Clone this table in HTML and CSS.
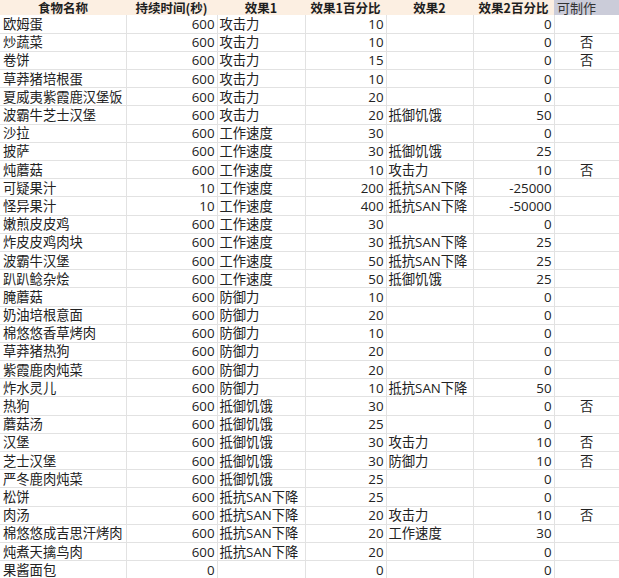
FILE: index.html
```html
<!DOCTYPE html>
<html lang="zh-CN">
<head>
<meta charset="utf-8">
<title>食物</title>
<link rel="stylesheet" href="styles.css">
</head>
<body>
<table class="sheet">
  <colgroup>
    <col class="c-name"><col class="c-dur"><col class="c-e1"><col class="c-p1"><col class="c-e2"><col class="c-p2"><col class="c-mk">
  </colgroup>
  <thead>
    <tr>
      <th>食物名称</th><th>持续时间(秒)</th><th>效果1</th><th>效果1百分比</th><th>效果2</th><th>效果2百分比</th><th class="mk-h">可制作</th>
    </tr>
  </thead>
  <tbody>
    <tr><td>欧姆蛋</td><td class="n">600</td><td>攻击力</td><td class="n">10</td><td></td><td class="n">0</td><td class="mk"></td></tr>
    <tr><td>炒蔬菜</td><td class="n">600</td><td>攻击力</td><td class="n">10</td><td></td><td class="n">0</td><td class="mk">否</td></tr>
    <tr><td>卷饼</td><td class="n">600</td><td>攻击力</td><td class="n">15</td><td></td><td class="n">0</td><td class="mk">否</td></tr>
    <tr><td>草莽猪培根蛋</td><td class="n">600</td><td>攻击力</td><td class="n">10</td><td></td><td class="n">0</td><td class="mk"></td></tr>
    <tr><td>夏威夷紫霞鹿汉堡饭</td><td class="n">600</td><td>攻击力</td><td class="n">20</td><td></td><td class="n">0</td><td class="mk"></td></tr>
    <tr><td>波霸牛芝士汉堡</td><td class="n">600</td><td>攻击力</td><td class="n">20</td><td>抵御饥饿</td><td class="n">50</td><td class="mk"></td></tr>
    <tr><td>沙拉</td><td class="n">600</td><td>工作速度</td><td class="n">30</td><td></td><td class="n">0</td><td class="mk"></td></tr>
    <tr><td>披萨</td><td class="n">600</td><td>工作速度</td><td class="n">30</td><td>抵御饥饿</td><td class="n">25</td><td class="mk"></td></tr>
    <tr><td>炖蘑菇</td><td class="n">600</td><td>工作速度</td><td class="n">10</td><td>攻击力</td><td class="n">10</td><td class="mk">否</td></tr>
    <tr><td>可疑果汁</td><td class="n">10</td><td>工作速度</td><td class="n">200</td><td>抵抗SAN下降</td><td class="n">-25000</td><td class="mk"></td></tr>
    <tr><td>怪异果汁</td><td class="n">10</td><td>工作速度</td><td class="n">400</td><td>抵抗SAN下降</td><td class="n">-50000</td><td class="mk"></td></tr>
    <tr><td>嫩煎皮皮鸡</td><td class="n">600</td><td>工作速度</td><td class="n">30</td><td></td><td class="n">0</td><td class="mk"></td></tr>
    <tr><td>炸皮皮鸡肉块</td><td class="n">600</td><td>工作速度</td><td class="n">30</td><td>抵抗SAN下降</td><td class="n">25</td><td class="mk"></td></tr>
    <tr><td>波霸牛汉堡</td><td class="n">600</td><td>工作速度</td><td class="n">50</td><td>抵抗SAN下降</td><td class="n">25</td><td class="mk"></td></tr>
    <tr><td>趴趴鲶杂烩</td><td class="n">600</td><td>工作速度</td><td class="n">50</td><td>抵御饥饿</td><td class="n">25</td><td class="mk"></td></tr>
    <tr><td>腌蘑菇</td><td class="n">600</td><td>防御力</td><td class="n">10</td><td></td><td class="n">0</td><td class="mk"></td></tr>
    <tr><td>奶油培根意面</td><td class="n">600</td><td>防御力</td><td class="n">20</td><td></td><td class="n">0</td><td class="mk"></td></tr>
    <tr><td>棉悠悠香草烤肉</td><td class="n">600</td><td>防御力</td><td class="n">10</td><td></td><td class="n">0</td><td class="mk"></td></tr>
    <tr><td>草莽猪热狗</td><td class="n">600</td><td>防御力</td><td class="n">20</td><td></td><td class="n">0</td><td class="mk"></td></tr>
    <tr><td>紫霞鹿肉炖菜</td><td class="n">600</td><td>防御力</td><td class="n">20</td><td></td><td class="n">0</td><td class="mk"></td></tr>
    <tr><td>炸水灵儿</td><td class="n">600</td><td>防御力</td><td class="n">10</td><td>抵抗SAN下降</td><td class="n">50</td><td class="mk"></td></tr>
    <tr><td>热狗</td><td class="n">600</td><td>抵御饥饿</td><td class="n">30</td><td></td><td class="n">0</td><td class="mk">否</td></tr>
    <tr><td>蘑菇汤</td><td class="n">600</td><td>抵御饥饿</td><td class="n">25</td><td></td><td class="n">0</td><td class="mk"></td></tr>
    <tr><td>汉堡</td><td class="n">600</td><td>抵御饥饿</td><td class="n">30</td><td>攻击力</td><td class="n">10</td><td class="mk">否</td></tr>
    <tr><td>芝士汉堡</td><td class="n">600</td><td>抵御饥饿</td><td class="n">30</td><td>防御力</td><td class="n">10</td><td class="mk">否</td></tr>
    <tr><td>严冬鹿肉炖菜</td><td class="n">600</td><td>抵御饥饿</td><td class="n">25</td><td></td><td class="n">0</td><td class="mk"></td></tr>
    <tr><td>松饼</td><td class="n">600</td><td>抵抗SAN下降</td><td class="n">25</td><td></td><td class="n">0</td><td class="mk"></td></tr>
    <tr><td>肉汤</td><td class="n">600</td><td>抵抗SAN下降</td><td class="n">20</td><td>攻击力</td><td class="n">10</td><td class="mk">否</td></tr>
    <tr><td>棉悠悠成吉思汗烤肉</td><td class="n">600</td><td>抵抗SAN下降</td><td class="n">20</td><td>工作速度</td><td class="n">30</td><td class="mk"></td></tr>
    <tr><td>炖煮天擒鸟肉</td><td class="n">600</td><td>抵抗SAN下降</td><td class="n">20</td><td></td><td class="n">0</td><td class="mk"></td></tr>
    <tr><td>果酱面包</td><td class="n">0</td><td></td><td class="n">0</td><td></td><td class="n">0</td><td class="mk"></td></tr>
  </tbody>
</table>
</body>
</html>
```

FILE: styles.css
```css
html, body {
  margin: 0;
  padding: 0;
  background: #ffffff;
}

body {
  overflow: hidden;
  font-family: "Open Sans", "Noto Sans CJK SC", sans-serif;
  color: #222222;
}

.sheet {
  table-layout: fixed;
  width: 619px;
  border-collapse: collapse;
  border-spacing: 0;
  font-size: 13.3px;
}

.c-name { width: 126px; }
.c-dur { width: 91px; }
.c-e1 { width: 88px; }
.c-p1 { width: 81px; }
.c-e2 { width: 87px; }
.c-p2 { width: 81px; }
.c-mk { width: 65px; }

.sheet thead tr {
  height: 15px;
}

.sheet th {
  height: 15px;
  background: #fcefe2;
  font-family: "Noto Sans CJK SC", "Open Sans", sans-serif;
  font-weight: bold;
  font-size: 12.5px;
  line-height: 15px;
  padding: 0 2px;
  text-align: center;
  white-space: nowrap;
  overflow: visible;
  color: #1e1e1e;
}

.sheet th.mk-h {
  background: #cbccd9;
  font-weight: normal;
  font-size: 13px;
  text-align: left;
  color: #333333;
  padding-left: 3px;
}

.sheet tbody tr {
  height: 18.2px;
}

.sheet td {
  padding: 0 2px 0 2px;
  line-height: 16px;
  white-space: nowrap;
  overflow: hidden;
  border-bottom: 1px solid #e2e2e2;
  border-right: 1px solid #e2e2e2;
  vertical-align: middle;
}

.sheet td:first-child {
  padding-left: 3px;
}

.sheet td.n {
  text-align: right;
  padding-right: 2px;
}

.sheet td.mk {
  text-align: center;
  border-right: none;
}
```
